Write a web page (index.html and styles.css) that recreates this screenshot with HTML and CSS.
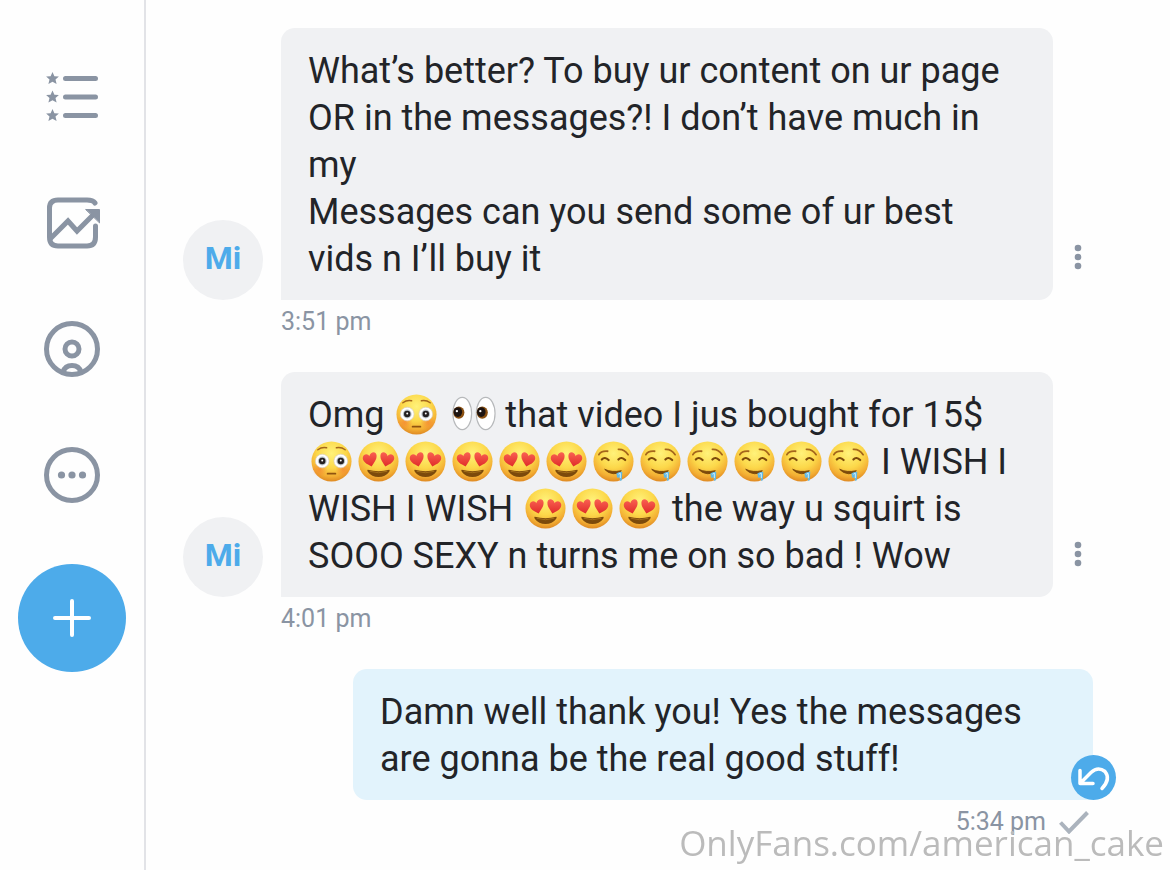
FILE: index.html
```
<!DOCTYPE html>
<html lang="en">
  <head>
    <meta charset="UTF-8" />
    <meta name="viewport" content="width=device-width, initial-scale=1.0" />
    <title>Messages</title>
    <link rel="stylesheet" href="styles.css">
  </head>
  <body>
    <!-- Emoji shapes, reused in the messages -->
    <svg class="sprite" aria-hidden="true">
      <defs>
        <radialGradient id="skin" cx="0.5" cy="0.3" r="0.72">
          <stop offset="0" stop-color="#fff27a" />
          <stop offset="0.5" stop-color="#fcd84a" />
          <stop offset="0.8" stop-color="#f3ae33" />
          <stop offset="1" stop-color="#dc8420" />
        </radialGradient>
        <radialGradient id="cheek">
          <stop offset="0" stop-color="#f4682c" stop-opacity="0.5" />
          <stop offset="1" stop-color="#f4682c" stop-opacity="0" />
        </radialGradient>
        <linearGradient id="heart" x1="0" y1="0" x2="0" y2="1">
          <stop offset="0" stop-color="#fa6152" />
          <stop offset="1" stop-color="#e02d2a" />
        </linearGradient>
        <symbol id="flushed" viewBox="0 0 42 42">
          <circle cx="21" cy="21" r="20.5" fill="url(#skin)" />
          <circle cx="9" cy="29" r="8" fill="url(#cheek)" />
          <circle cx="33" cy="29" r="8" fill="url(#cheek)" />
          <path d="M7 9q4-3 9-2M26 7q5-1 9 2" fill="none" stroke="#a4661c" stroke-width="1.5" stroke-linecap="round" />
          <circle cx="11.5" cy="20.5" r="7" fill="#fff" stroke="#d9cfc4" stroke-width="0.7" />
          <circle cx="30.5" cy="20.5" r="7" fill="#fff" stroke="#d9cfc4" stroke-width="0.7" />
          <circle cx="11.5" cy="20.5" r="4.5" fill="#b9c3c9" />
          <circle cx="30.5" cy="20.5" r="4.5" fill="#b9c3c9" />
          <circle cx="11.5" cy="20.5" r="3.3" fill="#231f20" />
          <circle cx="30.5" cy="20.5" r="3.3" fill="#231f20" />
          <circle cx="11.5" cy="20" r="1" fill="#fff" />
          <circle cx="30.5" cy="20" r="1" fill="#fff" />
          <path d="M17 33.5h8" stroke="#8f5310" stroke-width="1.8" stroke-linecap="round" />
        </symbol>
        <symbol id="heart-eyes" viewBox="0 0 42 42">
          <circle cx="21" cy="21" r="20.5" fill="url(#skin)" />
          <path d="M14 26C9 24 4 21 5 16.500C6 12.500 10.500 13 11.500 15.500C13 10.500 18.500 10 19 14.500C19.500 19 16 22.500 14 26Z" fill="url(#heart)" />
          <path d="M28 26C33 24 38 21 37 16.500C36 12.500 31.500 13 30.500 15.500C29 10.500 23.500 10 23 14.500C22.500 19 26 22.500 28 26Z" fill="url(#heart)" />
          <path d="M10 29.500Q21 32.500 32 29.500Q33 29.500 32 31.500Q28 37 21 37T10 31.500Q9 29.500 10 29.500Z" fill="#7c4a0b" />
          <path d="M12 31Q21 34 30 31" fill="none" stroke="#a5701b" stroke-width="1" />
        </symbol>
        <symbol id="drooling" viewBox="0 0 42 42">
          <circle cx="21" cy="21" r="20.5" fill="url(#skin)" />
          <path d="M6 14Q8 10 15 10.500M26 8.500Q32 8 36 14" fill="none" stroke="#a4661c" stroke-width="1.8" stroke-linecap="round" />
          <path d="M9 19Q12 15.500 16 19.500M26 19Q29 15.500 33 19.500" fill="none" stroke="#7c4a0b" stroke-width="2.2" stroke-linecap="round" />
          <path d="M12 29Q19 32.500 29 30.500Q27 34 21 33.500T12 29Z" fill="#7c4a0b" stroke="#7c4a0b" stroke-width="1" stroke-linejoin="round" />
          <path d="M24 33Q27 31 30 31.500L29.500 40Q28 42 27.500 39.500L27 36.500Q25.500 39 24.500 36.500Z" fill="#62b9e4" />
          <path d="M26 34l2-1v5" fill="none" stroke="#d3f0fb" stroke-width="1" />
        </symbol>
        <symbol id="eyes" viewBox="0 0 42 42" overflow="visible">
          <ellipse cx="10.5" cy="20" rx="9.6" ry="16.5" fill="#fff" stroke="#b7b9bb" stroke-width="1.2" />
          <ellipse cx="34.5" cy="20" rx="9.6" ry="16.5" fill="#fff" stroke="#b7b9bb" stroke-width="1.2" />
          <ellipse cx="7" cy="19" rx="5.7" ry="6.3" fill="#8a5011" />
          <ellipse cx="31" cy="19" rx="5.7" ry="6.3" fill="#8a5011" />
          <ellipse cx="6" cy="18.5" rx="4.4" ry="5" fill="#1d1411" />
          <ellipse cx="30" cy="18.5" rx="4.4" ry="5" fill="#1d1411" />
          <circle cx="5" cy="17.5" r="1.2" fill="#fff" />
          <circle cx="29" cy="17.5" r="1.2" fill="#fff" />
        </symbol>
      </defs>
    </svg>

    <!-- Sidebar -->
    <nav class="sidebar">
      <a href="#" class="nav-link" aria-label="Lists">
        <svg viewBox="0 0 56 56">
          <path d="M21.500 9.500h30M21.500 28h30M21.500 46.500h30" stroke="currentColor" stroke-width="5" stroke-linecap="round" />
          <path id="star" d="M8.500 3l1.900 4.200 4.500.4-3.400 3 1.100 4.500-4.100-2.400-4.100 2.400 1.100-4.500-3.400-3 4.500-.4z" fill="currentColor" />
          <use href="#star" y="18.500" />
          <use href="#star" y="37" />
        </svg>
      </a>
      <a href="#" class="nav-link" aria-label="Statistics">
        <svg viewBox="0 0 56 56" fill="none" stroke="currentColor" stroke-width="5" stroke-linecap="round" stroke-linejoin="round">
          <path d="M51 8Q49 5 43 5H14Q5.500 5 5.500 13V42Q5.500 51 14 51H43Q51.500 51 51.500 42V31" />
          <path d="M6 44L24 26l9 10L49 20" stroke-linejoin="miter" stroke-linecap="butt" />
          <path d="M42 14.500h13.500v13z" fill="currentColor" stroke-width="1" />
        </svg>
      </a>
      <a href="#" class="nav-link" aria-label="Profile">
        <svg viewBox="0 0 56 56" fill="none" stroke="currentColor" stroke-width="5">
          <circle cx="28" cy="28" r="25.5" />
          <circle cx="28" cy="28" r="7" />
          <path d="M19 51Q21 44.500 28 44.500T37 51" />
        </svg>
      </a>
      <a href="#" class="nav-link" aria-label="More">
        <svg viewBox="0 0 56 56" fill="currentColor">
          <circle cx="28" cy="28" r="25.5" fill="none" stroke="currentColor" stroke-width="5" />
          <circle cx="17.5" cy="28" r="3.6" />
          <circle cx="28" cy="28" r="3.6" />
          <circle cx="38.5" cy="28" r="3.6" />
        </svg>
      </a>
      <button type="button" class="new-post" aria-label="New post">
        <svg viewBox="0 0 40 40">
          <path d="M20 3v34M3 20h34" stroke="currentColor" stroke-width="4" stroke-linecap="round" />
        </svg>
      </button>
    </nav>

    <!-- Conversation -->
    <main class="chat">
      <div class="message">
        <div class="message-row">
          <div class="avatar">Mi</div>
          <div class="bubble">What’s better? To buy ur content on ur page OR in the messages?! I don’t have much in my<br />Messages can you send some of ur best vids n I’ll buy it</div>
          <button type="button" class="menu" aria-label="Message options">
            <svg viewBox="0 0 8 26"><circle cx="4" cy="4" r="3.300" /><circle cx="4" cy="13" r="3.300" /><circle cx="4" cy="22" r="3.300" /></svg>
          </button>
        </div>
        <div class="time">3:51 pm</div>
      </div>

      <div class="message">
        <div class="message-row">
          <div class="avatar">Mi</div>
          <div class="bubble">Omg <svg class="emoji"><use href="#flushed" /></svg> <svg class="emoji"><use href="#eyes" /></svg> that video I jus bought for 15$ <svg class="emoji"><use href="#flushed" /></svg><svg class="emoji"><use href="#heart-eyes" /></svg><svg class="emoji"><use href="#heart-eyes" /></svg><svg class="emoji"><use href="#heart-eyes" /></svg><svg class="emoji"><use href="#heart-eyes" /></svg><svg class="emoji"><use href="#heart-eyes" /></svg><svg class="emoji"><use href="#drooling" /></svg><svg class="emoji"><use href="#drooling" /></svg><svg class="emoji"><use href="#drooling" /></svg><svg class="emoji"><use href="#drooling" /></svg><svg class="emoji"><use href="#drooling" /></svg><svg class="emoji"><use href="#drooling" /></svg> I WISH I WISH I WISH <svg class="emoji"><use href="#heart-eyes" /></svg><svg class="emoji"><use href="#heart-eyes" /></svg><svg class="emoji"><use href="#heart-eyes" /></svg> the way u squirt is SOOO SEXY n turns me on so bad ! Wow</div>
          <button type="button" class="menu" aria-label="Message options">
            <svg viewBox="0 0 8 26"><circle cx="4" cy="4" r="3.300" /><circle cx="4" cy="13" r="3.300" /><circle cx="4" cy="22" r="3.300" /></svg>
          </button>
        </div>
        <div class="time">4:01 pm</div>
      </div>

      <div class="message sent">
        <div class="bubble">
          Damn well thank you! Yes the messages are gonna be the real good stuff!
          <button type="button" class="undo" aria-label="Unsend">
            <svg viewBox="0 0 45 45">
              <path d="M9 15.500V28.500H22M9.500 28L20 17.500Q27 11 34 16.500Q40 24 31 33.500" fill="none" stroke="currentColor" stroke-width="3.5" stroke-linecap="round" stroke-linejoin="round" />
            </svg>
          </button>
        </div>
        <div class="time">
          5:34 pm
          <svg class="check" viewBox="0 0 32 24"><path d="M2.500 12.500L11 21.500L29.500 2.500" /></svg>
        </div>
      </div>
    </main>

    <div class="watermark">OnlyFans.com/american_cake</div>
  </body>
</html>
```
FILE: styles.css
```
/* General Page Styles */
* {
  box-sizing: border-box;
}

body {
  font-family: Roboto, "Liberation Sans", sans-serif;
  background-color: #fefefe;
  color: #222428;
  margin: 0;
  min-height: 100vh;
  display: flex;
}

svg {
  display: block;
}

button {
  border: none;
  padding: 0;
  cursor: pointer;
}

.sprite {
  position: absolute;
  width: 0;
  height: 0;
}

/* Sidebar */
.sidebar {
  flex: none;
  width: 146px;
  padding-top: 69px;
  border-right: 2px solid #e2e3e7;
  display: flex;
  flex-direction: column;
  align-items: center;
  gap: 70px;
}

.nav-link {
  color: #8a94a3;
  width: 56px;
  height: 56px;
}

.new-post {
  width: 108px;
  height: 108px;
  margin-top: -9px;
  border-radius: 50%;
  background-color: #4dabea;
  color: white;
  display: flex;
  align-items: center;
  justify-content: center;
}

.new-post svg {
  width: 40px;
  height: 40px;
}

/* Conversation */
.chat {
  flex: 1;
  padding: 28px 77px 0 37px;
}

.message {
  margin-bottom: 28px;
}

.message-row {
  display: flex;
  align-items: flex-end;
}

.avatar {
  flex: none;
  width: 80px;
  height: 80px;
  margin-right: 18px;
  border-radius: 50%;
  background-color: #f0f1f3;
  color: #4dabea;
  font-size: 32px;
  font-weight: bold;
  line-height: 76px;
  text-align: center;
}

.bubble {
  flex: 1;
  padding: 20px 27px 17px;
  border-radius: 14px 14px 14px 0;
  background-color: #f0f1f3;
  font-size: 36px;
  line-height: 47px;
}

.menu {
  flex: none;
  width: 30px;
  height: 86px;
  margin-left: 10px;
  background: none;
  display: flex;
  align-items: center;
  justify-content: center;
}

.menu svg {
  width: 8px;
  height: 26px;
  fill: #8a94a3;
}

.emoji {
  display: inline-block;
  width: 41px;
  height: 41px;
  margin: 0 3px;
  vertical-align: -8px;
  overflow: visible;
}

.time {
  margin-left: 98px;
  color: #8a94a3;
  font-size: 25px;
  line-height: 44px;
}

/* Own messages */
.sent .bubble {
  position: relative;
  margin-left: 170px;
  border-radius: 14px 14px 0 14px;
  background-color: #e2f3fc;
}

.sent .time {
  display: flex;
  align-items: center;
  justify-content: flex-end;
  gap: 12px;
  padding-right: 3px;
}

.undo {
  position: absolute;
  right: -23px;
  bottom: 0;
  width: 45px;
  height: 45px;
  border-radius: 50%;
  background-color: #4dabea;
  color: white;
}

.check {
  width: 32px;
  height: 24px;
  fill: none;
  stroke: #abb3bd;
  stroke-width: 4;
}

/* Watermark */
.watermark {
  position: fixed;
  right: 6px;
  bottom: 3px;
  color: #bbbbbb;
  font-family: "Open Sans", "Noto Sans", sans-serif;
  font-size: 35px;
  line-height: 48px;
}
```
